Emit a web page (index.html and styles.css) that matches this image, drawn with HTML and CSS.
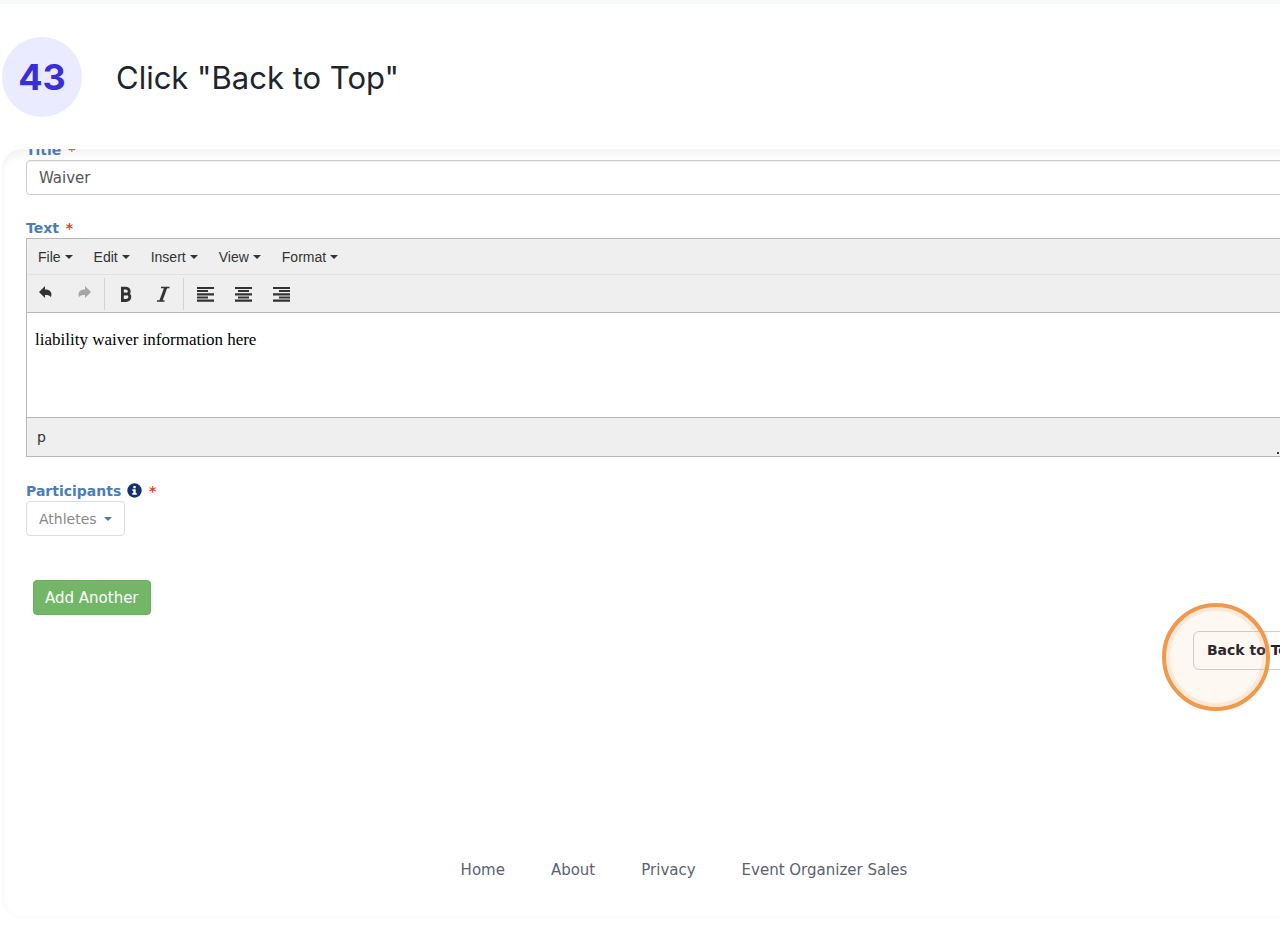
FILE: index.html
```html
<!DOCTYPE html>
<html lang="en">
<head>
    <meta charset="UTF-8">
    <meta name="viewport" content="width=device-width, initial-scale=1.0">
    <title>Click "Back to Top"</title>
    <link rel="stylesheet" href="styles.css">
</head>
<body>
    <header class="step-header">
        <span class="step-number">43</span>
        <h1 class="step-title">Click "Back to Top"</h1>
    </header>

    <main class="frame">
        <form class="waiver-form">
            <label class="field-label clipped" for="waiver-title">Title <span class="required">*</span></label>
            <input class="text-input" type="text" id="waiver-title" value="Waiver">

            <label class="field-label" for="waiver-text">Text <span class="required">*</span></label>
            <div class="editor">
                <div class="menubar">
                    <button type="button" class="menu-item">File</button>
                    <button type="button" class="menu-item">Edit</button>
                    <button type="button" class="menu-item">Insert</button>
                    <button type="button" class="menu-item">View</button>
                    <button type="button" class="menu-item">Format</button>
                </div>
                <div class="toolbar">
                    <div class="tool-group">
                        <button type="button" class="tool" aria-label="Undo">
                            <svg width="18" height="18" viewBox="0 0 18 18"><path d="M2 7 L8 1 V4.500 C13 4.500 15.500 7 14 12.500 C13.500 10.500 11 10 8 10 V13 Z" fill="#333"/></svg>
                        </button>
                        <button type="button" class="tool" aria-label="Redo" disabled>
                            <svg width="18" height="18" viewBox="0 0 18 18"><path d="M16 7 L10 1 V4.500 C5 4.500 2.500 7 4 12.500 C4.500 10.500 7 10 10 10 V13 Z" fill="#a5a5a5"/></svg>
                        </button>
                    </div>
                    <div class="tool-group">
                        <button type="button" class="tool" aria-label="Bold">
                            <svg width="18" height="18" viewBox="0 0 18 18"><path d="M5 3.200 H9.500 C14 3.200 14 8.200 11.500 9 C15 9.800 14.500 15.500 10 15.500 H5 M6.400 3 V15.500 M6 9 H10.500" fill="none" stroke="#333" stroke-width="2.800"/></svg>
                        </button>
                        <button type="button" class="tool" aria-label="Italic">
                            <svg width="18" height="18" viewBox="0 0 18 18"><path d="M7 2.500 H15.500 M3 16 H10.500" stroke="#333" stroke-width="1.300"/><path d="M11.800 2.500 L6.800 16" stroke="#333" stroke-width="3"/></svg>
                        </button>
                    </div>
                    <div class="tool-group align-group">
                        <button type="button" class="tool" aria-label="Align left">
                            <svg width="18" height="18" viewBox="0 0 18 18"><path d="M1 3 H18 M1 6 H12 M1 9.300 H18 M1 12.500 H12 M1 15.700 H18" stroke="#333" stroke-width="2.200"/></svg>
                        </button>
                        <button type="button" class="tool" aria-label="Align center">
                            <svg width="18" height="18" viewBox="0 0 18 18"><path d="M1 3 H18 M4 6 H15 M1 9.300 H18 M4 12.500 H15 M1 15.700 H18" stroke="#333" stroke-width="2.200"/></svg>
                        </button>
                        <button type="button" class="tool" aria-label="Align right">
                            <svg width="18" height="18" viewBox="0 0 18 18"><path d="M1 3 H18 M7 6 H18 M1 9.300 H18 M7 12.500 H18 M1 15.700 H18" stroke="#333" stroke-width="2.200"/></svg>
                        </button>
                    </div>
                </div>
                <textarea class="editor-text" id="waiver-text">liability waiver information here</textarea>
                <div class="statusbar">
                    <span>p</span>
                    <svg class="resize-handle" width="13" height="14" viewBox="0 0 13 14"><path d="M0 10h2v2h-2z M5 10h2v2h-2z M10 10h2v2h-2z M5 5h2v2h-2z M10 5h2v2h-2z M10 0h2v2h-2z" fill="#333"/></svg>
                </div>
            </div>

            <label class="field-label" for="participants">Participants
                <svg class="info" width="15" height="15" viewBox="0 0 15 15"><circle cx="7.500" cy="7.500" r="7.200" fill="#14306e"/><path d="M6.300 3 H8.700 V5.200 H6.300 Z M5.300 6.200 H8.700 V10 H9.700 V11.700 H5.300 V10 H6.300 V7.700 H5.300 Z" fill="#fff"/></svg>
                <span class="required">*</span></label>
            <div class="select-box">
                <select id="participants">
                    <option>Athletes</option>
                </select>
            </div>

            <button type="button" class="add-button">Add Another</button>
            <div class="top-row">
                <a class="top-link" href="#">Back to Top<span class="click-ring"></span></a>
            </div>
        </form>

        <footer class="page-links">
            <a href="#">Home</a>
            <a href="#">About</a>
            <a href="#">Privacy</a>
            <a href="#">Event Organizer Sales</a>
        </footer>
    </main>
</body>
</html>
```
FILE: styles.css
```css
* {
    box-sizing: border-box;
}
html {
    overflow-x: hidden;
}
body {
    margin: 0;
    border-top: 4px solid #f7f8fa;
    background-color: #fff;
    font-family: "DejaVu Sans", Verdana, sans-serif;
    font-size: 14px;
    overflow-x: clip;
}
button, input, select {
    font: inherit;
}
.step-header {
    display: flex;
    align-items: center;
    gap: 34px;
    padding: 33px 2px 32px;
}
.step-number {
    display: flex;
    align-items: center;
    justify-content: center;
    width: 80px;
    height: 80px;
    border-radius: 50%;
    background-color: #ebebff;
    color: #392fd5;
    font-family: Inter, sans-serif;
    font-size: 36px;
    font-weight: bold;
}
.step-title {
    margin: 0;
    color: #20242c;
    font-family: Inter, sans-serif;
    font-size: 31px;
    font-weight: normal;
}
/* The captured page runs past the right side of the window */
.frame {
    margin: 0 -86px 22px 2px;
    padding: 0 75px 38px 24px;
    border-radius: 20px;
    box-shadow: inset 0 10px 10px -5px #f2f2f2, inset 2px -1px 4px #fafafa;
    overflow: hidden;
}
.waiver-form {
    display: flex;
    flex-direction: column;
    align-items: flex-start;
}
.field-label {
    color: #4a7db8;
    font-weight: bold;
    line-height: 20px;
}
.field-label.clipped {
    margin-top: -9px;
}
.required {
    margin-left: 2px;
    color: #ee3a2c;
}
.info {
    margin-left: 1px;
    vertical-align: -2px;
}
.text-input {
    width: 100%;
    height: 35px;
    margin-bottom: 23px;
    padding: 0 12px;
    border: 1px solid #ccc;
    border-radius: 4px;
    background-color: #fff;
    color: #555;
    font-size: 15px;
    box-shadow: inset 0 1px 1px #eee;
}
.editor {
    width: 100%;
    margin-bottom: 24px;
    border: 1px solid #b8b8b8;
    background-color: #efefef;
}
.menubar {
    display: flex;
    gap: 21px;
    height: 36px;
    padding: 0 11px;
    border-bottom: 1px solid #e2e2e2;
}
.menu-item {
    display: flex;
    align-items: center;
    gap: 4px;
    padding: 0;
    border: none;
    background: none;
    color: #333;
    font-family: "Liberation Sans", Arial, sans-serif;
}
.menu-item::after, .select-box::after {
    content: "";
    border: 4px solid transparent;
    border-top-color: #333;
    border-bottom: none;
}
.toolbar {
    display: flex;
    align-items: center;
    height: 37px;
}
.tool-group {
    display: flex;
    align-items: center;
    gap: 20px;
    height: 32px;
    padding: 0 11px;
}
.tool-group:first-child {
    padding-left: 10px;
}
.tool-group.align-group {
    padding-left: 12px;
}
.tool-group + .tool-group {
    border-left: 1px solid #d4d4d4;
}
.tool {
    display: flex;
    padding: 0;
    border: none;
    background: none;
}
.editor-text {
    display: block;
    width: 100%;
    height: 106px;
    padding: 17px 8px;
    border: solid #b8b8b8;
    border-width: 1px 0;
    background-color: #fff;
    color: #000;
    font-family: "Liberation Serif", "Times New Roman", serif;
    font-size: 17px;
    resize: none;
}
.statusbar {
    display: flex;
    align-items: center;
    justify-content: space-between;
    height: 38px;
    padding-left: 10px;
    color: #333;
}
.resize-handle {
    align-self: flex-end;
}
.select-box {
    display: flex;
    align-items: center;
    position: relative;
}
.select-box select {
    height: 35px;
    padding: 0 27px 0 12px;
    border: 1px solid #ddd;
    border-radius: 4px;
    appearance: none;
    background-color: #fff;
    color: #888;
}
.select-box::after {
    position: absolute;
    right: 13px;
    border-top-color: #5078a8;
    pointer-events: none;
}
.add-button {
    height: 35px;
    margin: 44px 7px 16px;
    padding: 0 11px;
    border: 1px solid #68ae5c;
    border-radius: 4px;
    background-color: #73b667;
    color: #fff;
    font-size: 15px;
}
.top-row {
    align-self: flex-end;
    margin-right: -21px;
}
.top-link {
    display: block;
    position: relative;
    padding: 0 13px;
    border: 1px solid #cfcfd6;
    border-radius: 6px;
    color: #20202c;
    font-weight: bold;
    line-height: 37px;
    text-decoration: none;
}
/* Orange highlight around the click point */
.click-ring {
    position: absolute;
    left: -32px;
    top: -29px;
    width: 108px;
    height: 108px;
    border: 4px solid #f0984c;
    border-radius: 50%;
    background-color: rgba(240, 152, 76, 0.07);
    box-shadow: inset 0 0 0 4px rgba(240, 152, 76, 0.16);
}
.page-links {
    display: flex;
    justify-content: center;
    gap: 46px;
    margin: 190px -75px 0 -24px;
    font-size: 15px;
    line-height: 20px;
}
.page-links a {
    color: #5b6270;
    text-decoration: none;
}
```
